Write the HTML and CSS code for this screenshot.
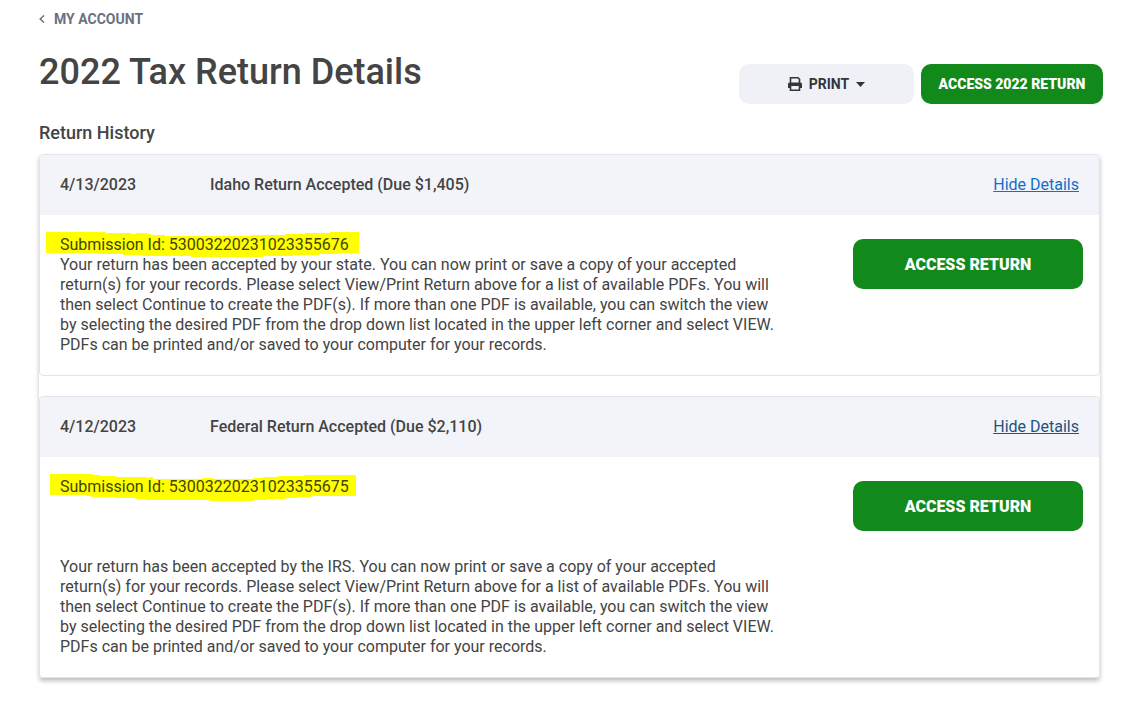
FILE: index.html
```html
<!DOCTYPE html>
<html lang="en">
<head>
    <meta charset="UTF-8">
    <meta name="viewport" content="width=device-width, initial-scale=1">
    <title>2022 Tax Return Details</title>
    <link rel="stylesheet" href="styles.css">
</head>
<body>
<main class="page">
    <a class="back-link" href="#">
        <svg width="6" height="8" viewBox="0 0 6 8" aria-hidden="true">
            <path d="M5 .5 1.200 4 5 7.500" fill="none" stroke="currentColor" stroke-width="1.500"/>
        </svg>
        MY ACCOUNT
    </a>

    <header class="page-header">
        <h1>2022 Tax Return Details</h1>
        <div class="header-actions">
            <button class="btn btn-print" type="button">
                <svg width="14" height="14" viewBox="0 0 14 14" aria-hidden="true">
                    <path d="M2.500 6V.8h7.500l1.500 1.500V6" fill="none" stroke="currentColor" stroke-width="1.600"/>
                    <path d="M1.500 5.500h11A1.500 1.500 0 0 1 14 7v4h-2.500V9h-9v2H0V7a1.500 1.500 0 0 1 1.500-1.500z" fill="currentColor"/>
                    <path d="M2.500 9v4.200h9V9" fill="none" stroke="currentColor" stroke-width="1.600"/>
                </svg>
                PRINT
                <svg width="9" height="5" viewBox="0 0 9 5" aria-hidden="true">
                    <path d="M0 0h9L4.500 5z" fill="currentColor"/>
                </svg>
            </button>
            <button class="btn btn-green" type="button">ACCESS 2022 RETURN</button>
        </div>
    </header>

    <h2>Return History</h2>

    <div class="history">
        <section class="card">
            <div class="card-header">
                <span class="card-date">4/13/2023</span>
                <span class="card-title">Idaho Return Accepted (Due $1,405)</span>
                <a class="details-link" href="#">Hide Details</a>
            </div>
            <div class="card-body">
                <div class="card-text">
                    <div class="submission">
                        <svg class="marker" width="313" height="26" viewBox="0 0 313 26" aria-hidden="true">
                            <path d="M0 0H60V1H85V2H90V1H101V2H105V3H119V4H204V3H239V2H259V1H284V0H313V21H292V22H273V23H247V24H217V25H145V24H115V24H97V23H77V22H52V21H0z"/>
                        </svg>
                        <span>Submission Id: 53003220231023355676</span>
                    </div>
                    <p>Your return has been accepted by your state. You can now print or save a copy of your accepted return(s) for your records. Please select View/Print Return above for a list of available PDFs. You will then select Continue to create the PDF(s). If more than one PDF is available, you can switch the view by selecting the desired PDF from the drop down list located in the upper left corner and select VIEW. PDFs can be printed and/or saved to your computer for your records.</p>
                </div>
                <button class="btn btn-green btn-large" type="button">ACCESS RETURN</button>
            </div>
        </section>

        <section class="card">
            <div class="card-header">
                <span class="card-date">4/12/2023</span>
                <span class="card-title">Federal Return Accepted (Due $2,110)</span>
                <a class="details-link active" href="#">Hide Details</a>
            </div>
            <div class="card-body">
                <div class="card-text spaced">
                    <div class="submission">
                        <svg class="marker marker-federal" width="306" height="27" viewBox="0 0 306 27" aria-hidden="true">
                            <path d="M0 0H43V1H50V2H66V3H97V4H99V3H103V5H152V4H164V5H204V4H213V3H228V2H254V1H306V22H262V23H248V24H235V25H217V26H203V27H160V26H95V25H86V24H65V23H41V22H37V21H0z"/>
                        </svg>
                        <span>Submission Id: 53003220231023355675</span>
                    </div>
                    <p>Your return has been accepted by the IRS. You can now print or save a copy of your accepted return(s) for your records. Please select View/Print Return above for a list of available PDFs. You will then select Continue to create the PDF(s). If more than one PDF is available, you can switch the view by selecting the desired PDF from the drop down list located in the upper left corner and select VIEW. PDFs can be printed and/or saved to your computer for your records.</p>
                </div>
                <button class="btn btn-green btn-large" type="button">ACCESS RETURN</button>
            </div>
        </section>
    </div>
</main>
</body>
</html>
```

FILE: styles.css
```css
* {
    box-sizing: border-box;
}

body {
    margin: 0;
    font-family: Roboto, Arial, sans-serif;
    font-size: 16px;
    line-height: 20px;
    color: #444;
    background-color: #fff;
}

h1, h2, p {
    margin: 0;
}

.page {
    padding: 8px 38px 20px 39px;
}

.back-link {
    display: inline-flex;
    align-items: center;
    gap: 9px;
    font-size: 14px;
    line-height: 22px;
    font-weight: 700;
    color: #6b7080;
    text-decoration: none;
}

.page-header {
    display: flex;
    justify-content: space-between;
    align-items: flex-end;
    margin-top: 19px;
}

h1 {
    align-self: flex-start;
    font-size: 36px;
    line-height: 46px;
    font-weight: 500;
}

.header-actions {
    display: flex;
    gap: 7px;
    padding-top: 15px;
}

.btn {
    height: 40px;
    padding: 0 16px;
    border: none;
    border-radius: 10px;
    font-family: inherit;
    font-size: 14px;
    font-weight: 700;
    cursor: pointer;
}

.btn-print {
    display: flex;
    justify-content: center;
    align-items: center;
    gap: 7px;
    width: 175px;
    background-color: #f0f1f6;
    color: #33343c;
}

.btn-green {
    min-width: 182px;
    background-color: #12891b;
    color: #fff;
    font-weight: 900;
}

.btn-large {
    flex: none;
    width: 230px;
    height: 50px;
    margin-top: 4px;
    font-size: 16px;
}

h2 {
    margin: 19px 0 11px;
    font-size: 18px;
    line-height: 20px;
    font-weight: 500;
}

.history {
    display: flex;
    flex-direction: column;
    gap: 20px;
    margin-right: 3px;
    border-radius: 4px;
    box-shadow: 0 3px 4px rgba(0, 0, 0, 0.25);
}

.card {
    border: 1px solid #e4e5ea;
    border-radius: 4px;
    overflow: hidden;
}

.card-header {
    display: flex;
    align-items: center;
    height: 60px;
    padding: 0 20px;
    background-color: #f3f4f9;
    font-weight: 500;
}

.card-date {
    width: 150px;
}

.details-link {
    margin-left: auto;
    font-weight: 400;
    color: #1070c8;
    text-decoration: underline;
}

.details-link.active {
    color: #23527c;
}

.card-body {
    display: flex;
    justify-content: space-between;
    align-items: flex-start;
    padding: 20px 16px 20px 20px;
}

.card-text {
    max-width: 720px;
}

.spaced p {
    margin-top: 60px;
}

/* highlighter stroke behind the submission id */
.submission {
    position: relative;
    color: #444400;
}

.submission span {
    position: relative;
}

.marker {
    position: absolute;
    top: -3px;
    left: -14px;
    fill: #ff0;
}

.marker-federal {
    left: -10px;
}
```
